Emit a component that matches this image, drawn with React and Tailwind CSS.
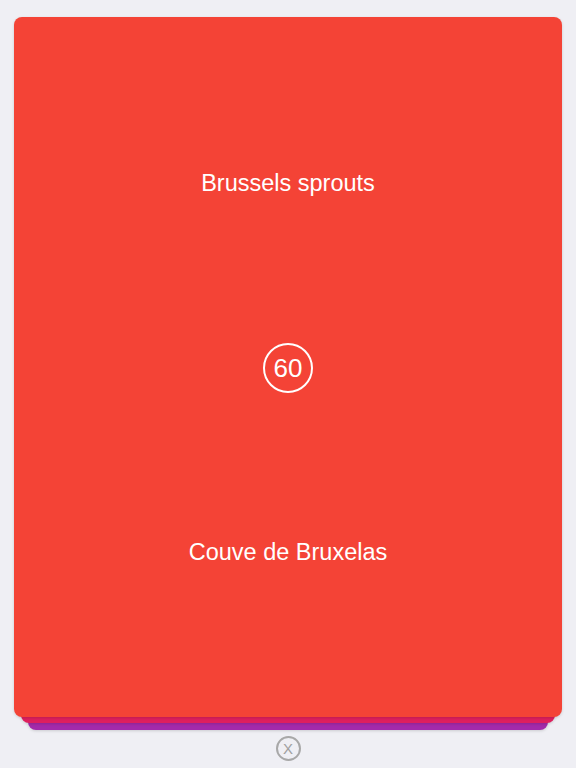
export default function App() {
  return (
    <div
      className="w-[576px] h-[768px] bg-[#efeff4] overflow-hidden flex flex-col items-stretch pt-[17px] px-[14px]"
      style={{ fontFamily: '"Liberation Sans", Arial, sans-serif' }}
    >
      <div className="relative z-30 h-[700px] bg-[#f44336] rounded-[8px] shadow-[0_1px_3px_rgba(0,0,0,0.15)] flex flex-col items-center justify-between pt-[152px] pb-[151px] text-white">
        <div className="text-[23.5px] leading-[28px]">Brussels sprouts</div>
        <div className="w-[50px] h-[50px] rounded-full border-2 border-white flex items-center justify-center text-[26px] leading-none">
          60
        </div>
        <div className="text-[23.5px] leading-[28px]">Couve de Bruxelas</div>
      </div>
      <div className="relative z-20 -mt-[10px] mx-[7px] h-[16px] bg-[#de1f5e] rounded-b-[8px] shadow-[0_1px_3px_rgba(0,0,0,0.15)]" />
      <div className="relative z-10 -mt-[9px] mx-[14px] h-[16px] bg-[#a32aaa] rounded-b-[8px] shadow-[0_1px_3px_rgba(0,0,0,0.15)]" />
      <div className="flex justify-center mt-[6px]">
        <button className="w-[25px] h-[25px] rounded-full border-2 border-[#a8a8a8] flex items-center justify-center text-[#a0a0a0] text-[15px] leading-none">
          X
        </button>
      </div>
    </div>
  );
}
